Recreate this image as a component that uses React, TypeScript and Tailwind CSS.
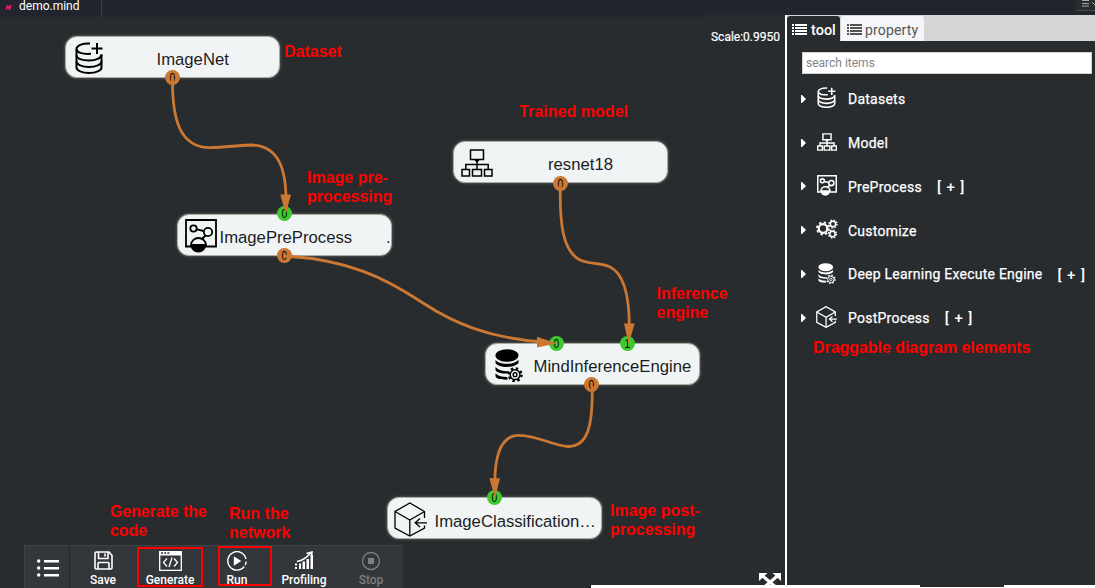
import React from "react";

type IconProps = { className?: string };

const DatasetIcon = ({ className }: IconProps) => (
  <svg viewBox="0 0 28 32" className={className} fill="none" stroke="currentColor">
    <path d="M15 1.500C7 1.200 1.500 3.600 1.500 7C1.500 10.300 7 12.500 16 11.800" />
    <path d="M1.500 7v18.500C1.500 28.500 7 31 14 31s12.500-2.500 12.500-5.500V12.500" />
    <path d="M1.500 13.500C1.500 16.500 7 18.500 14 18.500s12.500-2.500 12.500-6" />
    <path d="M1.500 19.500C1.500 22.500 7 25 14 25s12.500-2.500 12.500-5.500" />
    <path d="M22 1v11M16.500 6.500h11" />
  </svg>
);

const ModelIcon = ({ className }: IconProps) => (
  <svg viewBox="0 0 32 28" className={className} fill="none" stroke="currentColor">
    <path d="M9.500 1h13v9.500h-13zM1 20.500h7.500V27H1zM11.500 20.500h9V27h-9zM23.500 20.500H31V27h-7.500z" />
    <path d="M16 10.500v10M4.800 20.500V15.500h22.400v5" />
    <path d="M13.500 11l2.500 3 2.500-3z" fill="currentColor" stroke="none" />
  </svg>
);

const PreProcessIcon = ({ className }: IconProps) => (
  <svg viewBox="0 0 32 34" className={className} fill="none" stroke="currentColor">
    <path d="M6 27.500H1V1h30v26.500H20" />
    <circle cx="8.500" cy="9.500" r="3.200" />
    <circle cx="23" cy="13" r="4.200" />
    <path d="M11.800 10.400l7 1.600M20.500 16.500l-4 4" />
    <path d="M6 26a7.500 7 0 0 1 15 0z" />
    <path d="M5.500 26a7.800 7.500 0 0 0 15.600 0z" fill="currentColor" stroke="none" />
  </svg>
);

const EngineIcon = ({ className }: IconProps) => (
  <svg viewBox="0 0 28 33" className={className}>
    <g fill="currentColor">
      <ellipse cx="12" cy="6.500" rx="11.500" ry="6.300" />
      <path d="M.5 11c3 4.500 17.500 5.500 23 0v3c-2 2.500-6 4-11.500 4S.5 16 .5 13.500z" />
      <path d="M.5 18c3 3.500 9 4.600 13.500 4.300l-1.500 2.200C7 25 .5 23.500.5 20.500z" />
      <path d="M.5 24.500c2.500 2.500 6.500 3.500 11.500 3.500l.8 2.600C6 31 .5 29.500.5 27z" />
    </g>
    <g transform="translate(12.500 17.500) scale(.63)" fill="none" stroke="currentColor">
      <circle cx="12" cy="13" r="7.800" strokeWidth="2.400" />
      <circle cx="12" cy="13" r="3" strokeWidth="2.200" />
      <circle cx="12" cy="13" r="10.200" strokeWidth="3.600" strokeDasharray="3.800 4.210" />
    </g>
  </svg>
);

const PostProcessIcon = ({ className }: IconProps) => (
  <svg viewBox="0 0 33 35" className={className} fill="none" stroke="currentColor">
    <path d="M30.500 16V9.500L15.800 1 1 9.500v16.500L15.800 34l14.700-8v-2.500" />
    <path d="M1 9.500l14.800 8.500 14.700-8.500M15.800 18v16" />
    <path d="M33 20.800H21.500M26 16.500l-4.800 4.300 4.800 4.300" />
  </svg>
);

const CustomizeIcon = ({ className }: IconProps) => (
  <svg viewBox="0 0 22 20" className={className} fill="none" stroke="currentColor">
    <circle cx="7" cy="9.500" r="4.300" strokeWidth="2.200" />
    <circle cx="7" cy="9.500" r="6.100" strokeWidth="1.700" strokeDasharray="2.400 2.390" />
    <circle cx="17" cy="5" r="2.700" strokeWidth="1.500" />
    <circle cx="17" cy="5" r="4" strokeWidth="1.300" strokeDasharray="1.600 1.540" />
    <circle cx="16.500" cy="15" r="2.700" strokeWidth="1.500" />
    <circle cx="16.500" cy="15" r="4" strokeWidth="1.300" strokeDasharray="1.600 1.540" />
  </svg>
);

const ListIcon = ({ className }: IconProps) => (
  <svg viewBox="0 0 15 12" className={className} fill="currentColor">
    <path d="M0 0h2v2H0zM3 0h12v2H3zM0 3h2v2H0zM3 3h12v2H3zM0 6h2v2H0zM3 6h12v2H3zM0 9h2v2H0zM3 9h12v2H3z" />
  </svg>
);

const MenuIcon = () => (
  <svg viewBox="0 0 22 18" className="h-[18px] w-[22px]" fill="white">
    <circle cx="1.700" cy="2" r="1.700" />
    <circle cx="1.700" cy="9" r="1.700" />
    <circle cx="1.700" cy="16" r="1.700" />
    <path d="M7 1h15v2.500H7zM7 8h15v2.500H7zM7 15h15v2.500H7z" />
  </svg>
);

const SaveIcon = () => (
  <svg viewBox="0 0 19 19" className="h-[19px] w-[19px]" fill="none" stroke="currentColor" strokeWidth="1.600">
    <path d="M1 2.500V17q0 1 1 1h15q1 0 1-1V4.500L15 1H2.500Q1 1 1 2.500z" />
    <path d="M4.500 1v6.500h9.500V1M11 2.500v3" />
    <path d="M4 18v-5.500q0-1 1-1h9q1 0 1 1V18" />
  </svg>
);

const GenerateIcon = () => (
  <svg viewBox="0 0 23 20" className="h-5 w-[23px]" fill="none" stroke="currentColor" strokeWidth="1.300">
    <path d="M.7.700h21.600v18.600H.700z" />
    <path d="M0 0h23v4.500H0z" fill="currentColor" stroke="none" />
    <path d="M2 2h2M5.200 2h2M8.400 2h2" stroke="#33363b" strokeWidth="1.500" />
    <path d="M8 7.500L4.500 11.500 8 15.500M15 7.500l3.500 4-3.500 4M13 6.500l-3 9.500" />
  </svg>
);

const RunIcon = () => (
  <svg viewBox="0 0 20 20" className="h-5 w-5" fill="none" stroke="currentColor" strokeWidth="1.400">
    <path d="M17.300 15.500A9.200 9.200 0 1 1 19 8M19.200 10.500q-.2 2-1 3.500" />
    <path d="M7.500 6.500l5.500 3.500-5.500 3.500z" fill="currentColor" />
  </svg>
);

const ProfilingIcon = () => (
  <svg viewBox="0 0 18 19" className="h-[19px] w-[18px]" fill="currentColor">
    <path d="M0 12.500h2v2H0zM0 16h2v2H0zM4 12.500h2V18H4zM7.500 10.500h2.500V18H7.500zM11.500 8H14v10h-2.500zM15.500 4H18v14h-2.500z" />
    <path d="M2 10.500Q10 9 15.500 2M11.500 2.500L17 1l-.500 5" fill="none" stroke="currentColor" strokeWidth="1.600" />
  </svg>
);

const StopIcon = () => (
  <svg viewBox="0 0 20 20" className="h-5 w-5">
    <circle cx="10" cy="10" r="8.500" fill="none" stroke="currentColor" strokeWidth="1.300" />
    <path d="M7 7h6v6H7z" fill="currentColor" />
  </svg>
);

const nodeBase =
  "absolute flex h-[42px] w-[215px] items-center rounded-[12px] border border-[#aaa9a2] bg-[#f0f4f5] text-black shadow-[0_0_3px_rgba(190,180,160,0.5)]";
const nodeText = "absolute top-[13px] whitespace-nowrap text-[16.700px] leading-[20px] text-[#1b1d1f]";

const Port = ({ className, label }: { className: string; label: string }) => (
  <span
    className={`absolute flex h-[15px] w-[15px] items-center justify-center rounded-full text-[12px] leading-none text-black ${className}`}
  >
    <span className="scale-x-[0.850]">{label}</span>
  </span>
);

const Note = ({ className, children }: { className: string; children: React.ReactNode }) => (
  <p className={`absolute whitespace-nowrap text-[16px] leading-[19px] font-bold text-[#fe0000] ${className}`}>
    {children}
  </p>
);

const Edges = () => (
  <svg viewBox="0 0 785 573" className="absolute top-0 left-0 h-[573px] w-[785px]" fill="none">
    <g transform="translate(0 -15)">
      <g stroke="#cc7832" strokeWidth="2.800">
        <path d="M172.500 78C172 120 180 147.500 210 147.700C225 147.500 240 145 252 145C278 146 286 168 286 200" />
        <path d="M285 256C350 260 385 278 423 303C455 324 490 338 542 342" />
        <path d="M560.300 184C559.500 225 563 250 579 259.500C589 264.500 600 262.500 609 266.500C624 273 629.500 295 629.300 328" />
        <path d="M592.200 386C593 425 588 447 568 446.500C552 445.500 537 435 518 435.300C500 436 495 458 494.800 482" />
      </g>
      <g fill="#cc7832">
        <path d="M280.300 194.500h10.700L285.700 214z" />
        <path d="M537 336.800v10.700L557 343.500z" />
        <path d="M624 323.500h10.800L628.500 344z" />
        <path d="M489.300 478.300H500L495 498z" />
      </g>
    </g>
  </svg>
);

const Diagram = () => (
  <div className="absolute inset-0">
    <div className={`${nodeBase} top-[21px] left-[65px]`}>
      <DatasetIcon className="mt-[1px] ml-[9px] h-8 w-7 stroke-2" />
      <span className={`${nodeText} left-[90.500px]`}>ImageNet</span>
    </div>
    <div className={`${nodeBase} top-[126px] left-[453px]`}>
      <ModelIcon className="mt-[2px] ml-[7px] h-7 w-8 stroke-[1.500]" />
      <span className={`${nodeText} left-[94px]`}>resnet18</span>
    </div>
    <div className={`${nodeBase} top-[199px] left-[177px]`}>
      <PreProcessIcon className="mt-[2px] ml-[7px] h-[34px] w-8 stroke-[1.800]" />
      <span className={`${nodeText} left-[41.500px]`}>ImagePreProcess</span>
      <span className={`${nodeText} left-[208px]`}>.</span>
    </div>
    <div className={`${nodeBase} top-[328px] left-[485px]`}>
      <EngineIcon className="mt-[2px] ml-[9px] h-[33px] w-7" />
      <span className={`${nodeText} left-[47.500px]`}>MindInferenceEngine</span>
    </div>
    <div className={`${nodeBase} top-[482px] left-[387px]`}>
      <PostProcessIcon className="mt-[2px] ml-[6px] h-[35px] w-[33px] stroke-[1.300]" />
      <span className={`${nodeText} left-[46.500px] pt-[1px]`}>ImageClassification…</span>
    </div>

    <Port label="0" className="top-[55px] left-[165px] bg-[#cc7832]" />
    <Port label="0" className="top-[191px] left-[277px] bg-[#3ec92f]" />
    <Port label="0" className="top-[233px] left-[277px] bg-[#cc7832]" />
    <Port label="0" className="top-[161px] left-[553px] bg-[#cc7832]" />
    <Port label="0" className="top-[321px] left-[549px] bg-[#3ec92f]" />
    <Port label="1" className="top-[321px] left-[620px] bg-[#3ec92f]" />
    <Port label="0" className="top-[362px] left-[584px] bg-[#cc7832]" />
    <Port label="0" className="top-[475px] left-[487px] bg-[#3ec92f]" />
    <Edges />

    <Note className="top-[27px] left-[284px]">Dataset</Note>
    <Note className="top-[87px] left-[519px] tracking-[0.050px]">Trained model</Note>
    <Note className="top-[153px] left-[307px]">Image pre-<br />processing</Note>
    <Note className="top-[269px] left-[656.500px]">Inference<br />engine</Note>
    <Note className="top-[486px] left-[610px]">Image post-<br />processing</Note>
    <Note className="top-[487px] left-[110px] tracking-[-0.100px]">Generate the<br />code</Note>
    <Note className="top-[489px] left-[229px]">Run the<br />network</Note>
  </div>
);

const actions = [
  { label: "Save", icon: <SaveIcon />, tone: "text-white" },
  { label: "Generate", icon: <GenerateIcon />, tone: "text-white" },
  { label: "Run", icon: <RunIcon />, tone: "text-white" },
  { label: "Profiling", icon: <ProfilingIcon />, tone: "text-white" },
  { label: "Stop", icon: <StopIcon />, tone: "text-[#7d7f82]" },
];

const Toolbar = () => (
  <div className="absolute bottom-0 left-[24px] flex h-[43px] w-[379px] border-t border-l border-[#3f4246] bg-[#33363b] font-[Roboto,sans-serif]">
    <button className="flex w-[44.500px] shrink-0 items-center justify-center border-r border-[#25282b] pt-[2px] pl-[2px]">
      <MenuIcon />
    </button>
    {actions.map(({ label, icon, tone }) => (
      <button key={label} className={`flex w-[67px] shrink-0 flex-col items-center pt-[4.500px] ${tone}`}>
        <span className="flex h-5 items-center">{icon}</span>
        <span className="mt-[2.500px] text-[12px] leading-[14px] font-medium">{label}</span>
      </button>
    ))}
    <span className="absolute top-[1px] left-[112px] h-[40px] w-[66px] border-2 border-[#fe0000]" />
    <span className="absolute top-0 left-[193px] h-[40px] w-[54px] border-2 border-[#fe0000]" />
  </div>
);

const items = [
  { label: "Datasets", Icon: DatasetIcon, size: "h-[21px] w-[19px] stroke-[2.400]", expandable: false },
  { label: "Model", Icon: ModelIcon, size: "h-[18px] w-5 stroke-[2.300]", expandable: false },
  { label: "PreProcess", Icon: PreProcessIcon, size: "h-[21px] w-5 stroke-[2.500]", expandable: true },
  { label: "Customize", Icon: CustomizeIcon, size: "h-5 w-[22px]", expandable: false },
  { label: "Deep Learning Execute Engine", Icon: EngineIcon, size: "h-[21px] w-[18px]", expandable: true },
  { label: "PostProcess", Icon: PostProcessIcon, size: "h-[22px] w-[21px] stroke-[2]", expandable: true },
];

const SidePanel = () => (
  <aside className="relative flex w-[308px] flex-col bg-[#292c2f] font-[Roboto,sans-serif]">
    <div className="flex h-[26px] shrink-0 items-end gap-px bg-[#d6d6d6]">
      <div className="flex h-[25px] w-[53px] items-center gap-[4px] rounded-t-[3px] bg-[#292c2f] pt-1 pl-[5px] font-medium text-white">
        <ListIcon className="-mt-[2px] h-3 w-[15px] shrink-0" />
        <span className="text-[14.500px]">tool</span>
      </div>
      <div className="flex h-[25px] w-[83px] items-center gap-[3px] rounded-t-[3px] bg-[#f4f6f9] pt-1 pl-[6px] text-[#555]">
        <ListIcon className="-mt-[2px] h-3 w-[15px] shrink-0" />
        <span className="text-[14px] tracking-[0.150px]">property</span>
      </div>
    </div>
    <input
      placeholder="search items"
      className="mt-[11px] ml-[15px] h-[22px] w-[290px] shrink-0 border border-[#d8d2ce] bg-white px-[3px] text-[12px] text-black placeholder:text-[#858585]"
    />
    <ul className="mt-[3px] flex flex-col text-white">
      {items.map(({ label, Icon, size, expandable }) => (
        <li key={label} className="flex h-[43.800px] items-center pl-[14px]">
          <svg viewBox="0 0 5 8" className="h-2 w-[5px]" fill="currentColor">
            <path d="M0 0h1l4 4-4 4H0z" />
          </svg>
          <span className="mb-[2px] ml-[9px] flex w-[23px] items-center justify-center">
            <Icon className={`shrink-0 ${size}`} />
          </span>
          <span className="mt-[1.500px] ml-[10px] text-[14px] tracking-[0.240px] whitespace-nowrap [-webkit-text-stroke:0.250px_white]">
            {label}
          </span>
          {expandable && (
            <span className="mt-[1.500px] ml-[15px] text-[15px] font-medium tracking-[0.900px] whitespace-nowrap">
              [ + ]
            </span>
          )}
        </li>
      ))}
    </ul>
    <Note className="top-[323px] left-[26px] font-['Liberation_Sans',sans-serif] tracking-[-0.050px]">
      Draggable diagram elements
    </Note>
  </aside>
);

export default function App() {
  return (
    <div className="relative flex h-[588px] w-[1095px] flex-col overflow-hidden bg-[#292c2f] font-['Liberation_Sans',Arial,sans-serif]">
      <header className="flex h-[15px] shrink-0 justify-between bg-[#22252e] font-[Roboto,sans-serif]">
        <div className="relative z-10 flex h-[17px] w-[102px] items-start border-r border-[#383c43] bg-[#22252e] pl-[5px]">
          <svg viewBox="0 0 7 6" className="mt-[5px] h-[5px] w-[7px]" fill="#e91e63">
            <path d="M1.500 0h1.700l.8 2L5.500 0H7L5.800 6H4.200L4.500 3.500 3 5.500 2.300 3.500 1.500 6H0z" />
          </svg>
          <span className="-mt-[1px] ml-[7px] text-[12px] leading-[14px] text-white">demo.mind</span>
        </div>
        <div className="flex h-[11px] w-[19px] items-start border-b border-[#474a4d] bg-[#292c2f] pl-[6px] text-[#a4a7aa]">
          <svg viewBox="0 0 13 7" className="h-[7px] w-[13px] shrink-0" fill="none" stroke="currentColor">
            <path d="M0 .5h7M0 3.500h7M0 6h7M10 2l3 3" />
          </svg>
        </div>
      </header>
      <div className="flex min-h-0 flex-1">
        <main className="relative w-[785px] overflow-hidden bg-[#292c2f]">
          <div className="h-[2px] w-[704px] bg-[#22252e]" />
          <Diagram />
          <span className="absolute top-[15px] right-[5px] font-[Roboto,sans-serif] text-[12px] leading-[14px] text-white [-webkit-text-stroke:0.200px_white]">
            Scale:0.9950
          </span>
          <Toolbar />
          <svg viewBox="0 0 22 15" className="absolute right-[4px] bottom-0 h-[15px] w-[22px]" fill="white">
            <path d="M0 0h8.500L0 8zM22 0h-8.500L22 8z" />
            <path d="M3 2.500L19 16M19 2.500L3 16" stroke="white" strokeWidth="3.200" />
          </svg>
        </main>
        <div className="w-[2px] shrink-0 bg-white" />
        <SidePanel />
      </div>
      <div className="absolute bottom-0 left-[591px] flex h-[3px] w-[504px] items-end bg-white">
        <div className="mb-[1px] ml-[329px] h-[2px] w-[84px] bg-[#292c2f]" />
      </div>
    </div>
  );
}
